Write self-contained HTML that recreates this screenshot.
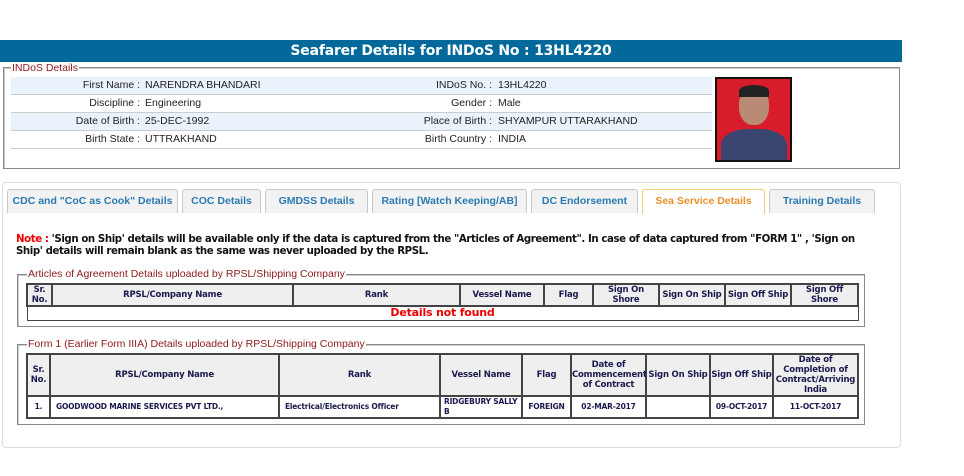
<!DOCTYPE html>
<html><head><meta charset="utf-8"><style>
*{box-sizing:border-box;margin:0;padding:0}
body{width:964px;height:476px;background:#fff;position:relative;font-family:"Liberation Sans",Arial,sans-serif;overflow:hidden}
.abs{position:absolute}
.title{left:0;top:40px;width:902px;height:22px;background:#03689a;color:#fff;font:bold 14px "DejaVu Sans",Verdana,sans-serif;letter-spacing:-0.2px;text-align:center;line-height:22px}
.fs{border:1px solid #888;box-shadow:inset 1px 1px 0 #ccc}
.leg{background:#fff;color:#8b1a1a;font-size:10.5px;padding:0 1px;line-height:12px}
.row{left:11px;width:701px;height:18px;border-bottom:1px solid #ccc;font-size:10.5px;color:#222;line-height:17px}
.row.s{background:#eaf2fb}
.row span{position:absolute;white-space:nowrap}
.l1{right:572px}
.v1{left:134px}
.l2{right:220px}
.v2{left:487px}
.tab{top:189px;height:24px;border:1px solid #c8c8c8;border-bottom:none;border-radius:3px 3px 0 0;background:#f2f2f2;color:#2a7ab0;font-size:10.5px;font-weight:bold;text-align:center;line-height:23px;white-space:nowrap}
table{border-collapse:collapse;position:absolute;font:bold 8.5px "DejaVu Sans",Verdana,sans-serif;letter-spacing:-0.2px;color:#1a1a4e;table-layout:fixed}
td,th{border:2px solid #444;text-align:center;padding:0;line-height:10px}
th{background:#efefef}
</style></head><body>
<div class="abs title">Seafarer Details for INDoS No : 13HL4220</div>
<div class="abs fs" style="left:3px;top:67px;width:897px;height:102px"></div>
<div class="abs leg" style="left:11px;top:62px">INDoS Details</div>
<div class="abs row s" style="top:77px"><span class="l1">First Name :</span><span class="v1">NARENDRA BHANDARI</span><span class="l2">INDoS No. :</span><span class="v2">13HL4220</span></div>
<div class="abs row" style="top:95px"><span class="l1">Discipline :</span><span class="v1">Engineering</span><span class="l2">Gender :</span><span class="v2">Male</span></div>
<div class="abs row s" style="top:113px"><span class="l1">Date of Birth :</span><span class="v1">25-DEC-1992</span><span class="l2">Place of Birth :</span><span class="v2">SHYAMPUR UTTARAKHAND</span></div>
<div class="abs row" style="top:131px"><span class="l1">Birth State :</span><span class="v1">UTTRAKHAND</span><span class="l2">Birth Country :</span><span class="v2">INDIA</span></div>
<div class="abs" style="left:715px;top:77px;width:77px;height:85px;background:#d81c2c;border:2px solid #111;overflow:hidden">
<div class="abs" style="left:22px;top:8px;width:30px;height:38px;border-radius:45%;background:#b98b74"></div>
<div class="abs" style="left:22px;top:6px;width:30px;height:12px;border-radius:50% 50% 0 0;background:#222"></div>
<div class="abs" style="left:4px;top:50px;width:66px;height:40px;border-radius:40% 40% 0 0;background:#3a4670"></div>
</div>
<div class="abs" style="left:2px;top:182px;width:899px;height:266px;border:1px solid #ddd;border-radius:4px"></div>
<div class="abs tab" style="left:7px;width:171px">CDC and "CoC as Cook" Details</div>
<div class="abs tab" style="left:182px;width:79px">COC Details</div>
<div class="abs tab" style="left:265px;width:103px">GMDSS Details</div>
<div class="abs tab" style="left:372px;width:155px">Rating [Watch Keeping/AB]</div>
<div class="abs tab" style="left:531px;width:107px">DC Endorsement</div>
<div class="abs tab" style="left:642px;width:123px;background:#fff;border-color:#f0d070;color:#e8902a;height:25px">Sea Service Details</div>
<div class="abs tab" style="left:769px;width:106px">Training Details</div>
<div class="abs" style="left:16px;top:234px;white-space:nowrap;font:bold 10.2px 'DejaVu Sans',Verdana,sans-serif;letter-spacing:-0.4px;line-height:12px;color:#111"><span style="color:#e00">Note :</span> 'Sign on Ship' details will be available only if the data is captured from the "Articles of Agreement". In case of data captured from "FORM 1" , 'Sign on<br>Ship' details will remain blank as the same was never uploaded by the RPSL.</div>
<div class="abs fs" style="left:17px;top:274px;width:848px;height:53px"></div>
<div class="abs leg" style="left:27px;top:268px">Articles of Agreement Details uploaded by RPSL/Shipping Company</div>
<table style="left:26px;top:283px;width:831px">
<colgroup><col style="width:25px"><col style="width:241px"><col style="width:167px"><col style="width:84px"><col style="width:49px"><col style="width:66px"><col style="width:66px"><col style="width:66px"><col style="width:67px"></colgroup>
<tr style="height:22px"><th>Sr. No.</th><th>RPSL/Company Name</th><th>Rank</th><th>Vessel Name</th><th>Flag</th><th>Sign On Shore</th><th style="white-space:nowrap">Sign On Ship</th><th style="white-space:nowrap">Sign Off Ship</th><th>Sign Off Shore</th></tr>
<tr style="height:14px"><td colspan="9" style="color:#e00;font-size:11px;border-width:1px">Details not found</td></tr>
</table>
<div class="abs fs" style="left:17px;top:344px;width:848px;height:81px"></div>
<div class="abs leg" style="left:27px;top:338px">Form 1 (Earlier Form IIIA) Details uploaded by RPSL/Shipping Company</div>
<table style="left:26px;top:353px;width:831px">
<colgroup><col style="width:23px"><col style="width:229px"><col style="width:161px"><col style="width:82px"><col style="width:49px"><col style="width:75px"><col style="width:64px"><col style="width:63px"><col style="width:85px"></colgroup>
<tr style="height:42px"><th>Sr. No.</th><th>RPSL/Company Name</th><th>Rank</th><th>Vessel Name</th><th>Flag</th><th>Date of Commencement of Contract</th><th style="white-space:nowrap">Sign On Ship</th><th style="white-space:nowrap">Sign Off Ship</th><th>Date of Completion of Contract/Arriving India</th></tr>
<tr style="height:21px"><td style="font-size:7.5px">1.</td><td style="text-align:left;font-size:7.5px;padding-left:5px">GOODWOOD MARINE SERVICES PVT LTD.,</td><td style="text-align:left;font-size:7.5px;padding-left:5px">Electrical/Electronics Officer</td><td style="text-align:left;font-size:7.5px;vertical-align:top;padding-left:3px">RIDGEBURY SALLY B</td><td style="font-size:7.5px">FOREIGN</td><td style="font-size:7.5px">02-MAR-2017</td><td></td><td style="font-size:7.5px">09-OCT-2017</td><td style="font-size:7.5px">11-OCT-2017</td></tr>
</table>
</body></html>
